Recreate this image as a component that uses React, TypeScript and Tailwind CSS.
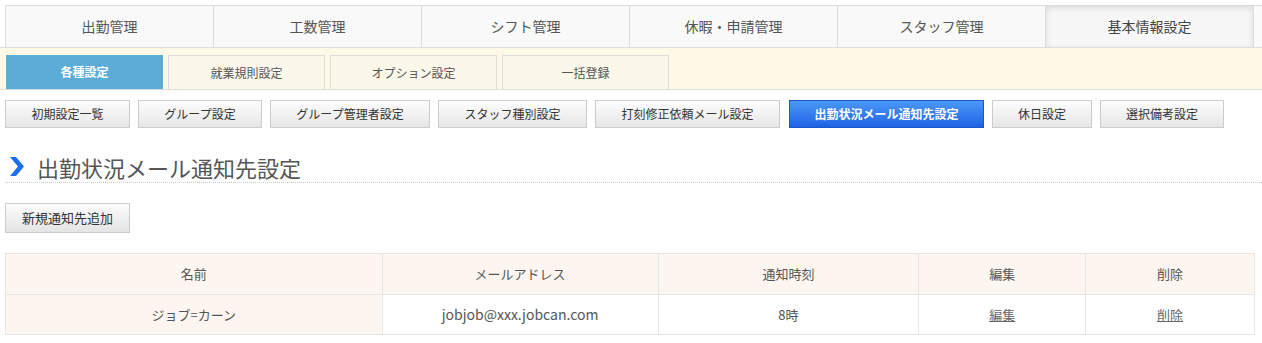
import React from 'react'

const mainNav = ['出勤管理', '工数管理', 'シフト管理', '休暇・申請管理', 'スタッフ管理', '基本情報設定']
const subTabs = [
  { label: '各種設定', w: 'w-[157px]' },
  { label: '就業規則設定', w: 'w-[157px]' },
  { label: 'オプション設定', w: 'w-[167px]' },
  { label: '一括登録', w: 'w-[167px]' },
]
const settingButtons = [
  { label: '初期設定一覧', w: 'w-[125px]' },
  { label: 'グループ設定', w: 'w-[124px]' },
  { label: 'グループ管理者設定', w: 'w-[160px]' },
  { label: 'スタッフ種別設定', w: 'w-[149px]' },
  { label: '打刻修正依頼メール設定', w: 'w-[185px]' },
  { label: '出勤状況メール通知先設定', w: 'w-[195px]', active: true },
  { label: '休日設定', w: 'w-[100px]' },
  { label: '選択備考設定', w: 'w-[124px]' },
]

export default function App() {
  return (
    <div className="min-h-screen bg-white text-[#555] font-['Noto_Sans_CJK_JP',sans-serif] pt-[5px]">
      {/* top navigation */}
      <nav className="flex h-[42px] ml-[5px] border-t border-l border-[#ddd] bg-[#f9f9f9]">
        {mainNav.map((item, i) => (
          <div
            key={item}
            className={
              'w-[208px] flex items-center justify-center text-[14px] border-r border-[#ddd] ' +
              (i === mainNav.length - 1 ? 'bg-[#f7f7f7] shadow-[inset_0_2px_6px_rgba(0,0,0,0.12)] text-[#444]' : '')
            }
          >
            {item}
          </div>
        ))}
        <div className="flex-1 bg-[#fafafa]" />
      </nav>

      {/* sub tabs */}
      <div className="h-[43px] bg-[#fef8e7] border-t border-b border-[#ddd] flex items-end gap-[5px] pl-[6px]">
        {subTabs.map((t, i) => (
          <div
            key={t.label}
            className={
              t.w +
              ' h-[34px] flex items-center justify-center text-[12px] ' +
              (i === 0
                ? 'bg-[#5badd8] text-white font-bold'
                : 'bg-[#fbf7ea] border border-b-0 border-[#ddd] text-[#555]')
            }
          >
            {t.label}
          </div>
        ))}
      </div>

      {/* setting buttons */}
      <div className="flex gap-[8px] pl-[5px] mt-[10px]">
        {settingButtons.map((b) =>
          b.active ? (
            <button
              key={b.label}
              className={
                b.w +
                ' h-[28px] text-[12px] font-bold text-white border border-[#1b56c9] bg-gradient-to-b from-[#4c98f8] to-[#1f62e5] ml-[1px]'
              }
            >
              {b.label}
            </button>
          ) : (
            <button
              key={b.label}
              className={
                b.w +
                ' h-[28px] text-[12px] text-[#333] border border-[#ccc] bg-gradient-to-b from-[#fdfdfd] to-[#e6e6e6]'
              }
            >
              {b.label}
            </button>
          ),
        )}
      </div>

      {/* title */}
      <div className="ml-[5px] mt-[15px] h-[40px] pt-[8px] flex items-center gap-[13px] pl-[5px] border-b border-dotted border-[#ccc]">
        <svg width="14" height="19" viewBox="0 0 14 19">
          <polygon points="0,0 6,0 14,9.5 6,19 0,19 8,9.5" fill="#1a6ff0" />
        </svg>
        <h1 className="text-[22px] text-[#555] leading-none">出勤状況メール通知先設定</h1>
      </div>

      <button className="block ml-[5px] mt-[20px] w-[125px] h-[30px] text-[13px] text-[#333] border border-[#ccc] bg-gradient-to-b from-[#fbfbfb] to-[#e4e4e4]">
        新規通知先追加
      </button>

      {/* table */}
      <table className="ml-[5px] mt-[20px] w-[1250px] border-collapse text-[13px] text-[#555]">
        <thead>
          <tr className="h-[41px] bg-[#fdf5ef]">
            <th className="w-[377px] border border-[#e6e6e6] font-normal">名前</th>
            <th className="w-[276px] border border-[#e6e6e6] font-normal">メールアドレス</th>
            <th className="w-[261px] border border-[#e6e6e6] font-normal">通知時刻</th>
            <th className="w-[167px] border border-[#e6e6e6] font-normal">編集</th>
            <th className="w-[169px] border border-[#e6e6e6] font-normal">削除</th>
          </tr>
        </thead>
        <tbody>
          <tr className="h-[40px]">
            <td className="border border-[#e6e6e6] bg-[#fdf5ef] text-center">ジョブ=カーン</td>
            <td className="border border-[#e6e6e6] text-center text-[14px]">jobjob@xxx.jobcan.com</td>
            <td className="border border-[#e6e6e6] text-center">8時</td>
            <td className="border border-[#e6e6e6] text-center">
              <a className="underline text-[#666]">編集</a>
            </td>
            <td className="border border-[#e6e6e6] text-center">
              <a className="underline text-[#666]">削除</a>
            </td>
          </tr>
        </tbody>
      </table>
    </div>
  )
}
